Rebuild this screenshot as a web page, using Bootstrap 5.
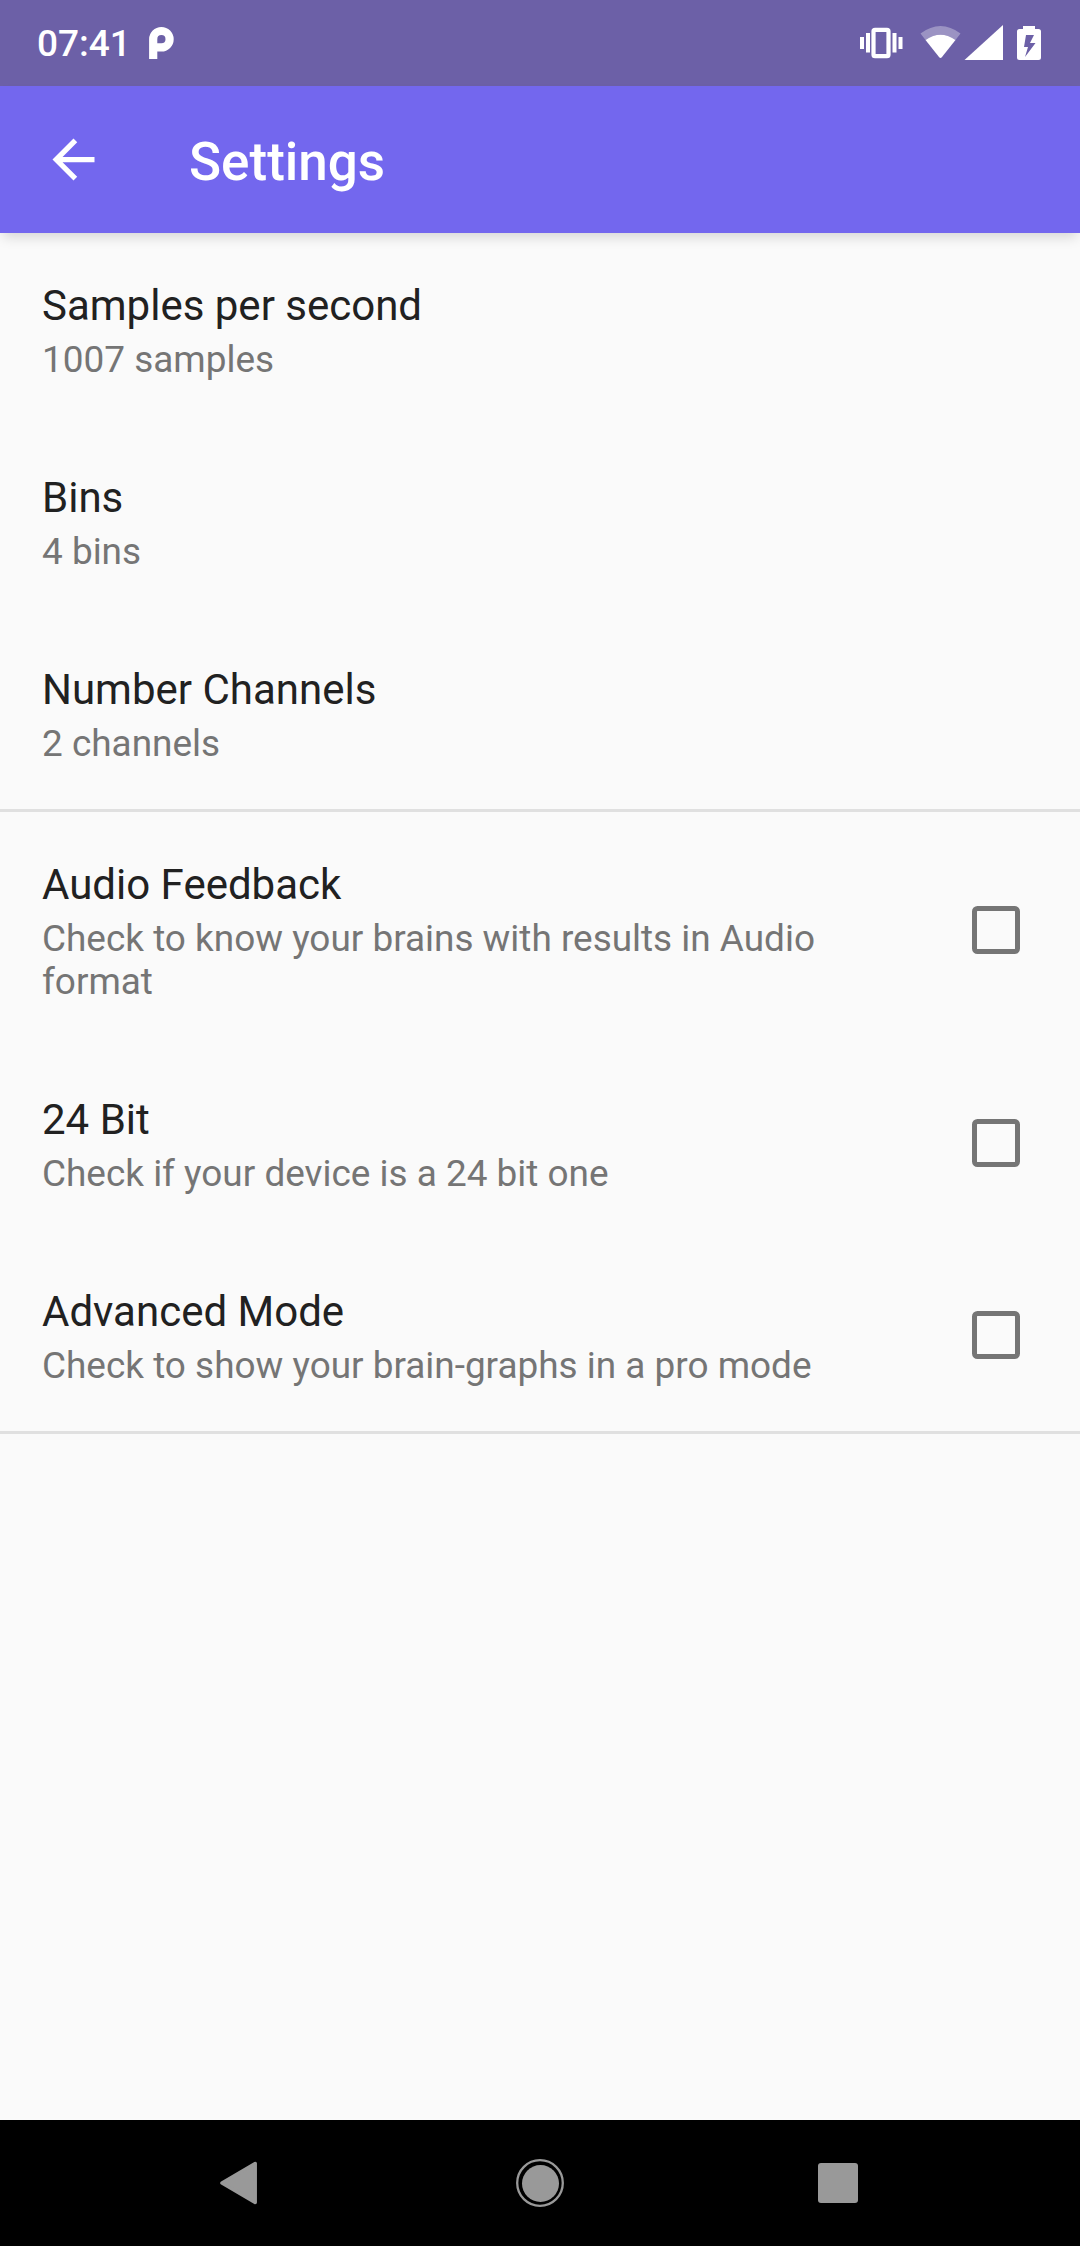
<!DOCTYPE html>
<html lang="en">
<head>
<meta charset="utf-8">
<meta name="viewport" content="width=device-width, initial-scale=1">
<title>Settings</title>
<link href="https://cdn.jsdelivr.net/npm/bootstrap@5.3.0/dist/css/bootstrap.min.css" rel="stylesheet">
<style>
body{font-family:Roboto,"Noto Sans",sans-serif;background:#fafafa;color:#212121}
.screen{height:2246px;width:1080px}
.status-bar{height:86px;background:#6c60a7;color:#fff;padding-left:37px}
.clock{font-size:37px;font-weight:500;line-height:44px;padding-top:2px}
.app-mark{margin-left:18px}
.app-bar{height:147px;background:#7367ee;padding:0 42px;box-shadow:0 7px 12px -3px rgba(0,0,0,.15);z-index:1}
.app-title{font-size:53px;font-weight:500;line-height:62px;color:#fff;margin-left:84px;padding-top:4px}
.pref{padding:48px 60px 44px 42px;border:0;background:transparent;color:#212121}
.pref-title{font-size:42px;line-height:50px;font-weight:400;margin:0 0 7px}
.pref-note{font-size:36.930px;line-height:43px;color:#757575;margin:0}
.pref-text{width:810px}
.pref .form-check-input{width:48px;height:48px;border:5px solid #757575;border-radius:5.5px;background:transparent;margin:0;position:static}
.pref-check{padding-top:0;padding-bottom:0}
.pref-check .pref-text{padding:48px 0 44px}
.group{border-bottom:3px solid #e0e0e0}
.nav-bar{height:126px;background:#000}
svg{display:block;flex:none}
</style>
</head>
<body>
<div class="screen d-flex flex-column">
  <header class="status-bar d-flex align-items-center">
    <span class="clock">07:41</span>
    <svg width="26" height="86" viewBox="149 0 26 86" class="app-mark">
      <path d="M153.200 59V39.200a8.200 8.200 0 1 1 8.200 8.200H153.200" fill="none" stroke="#fff" stroke-width="8.200"/>
    </svg>
    <svg class="ms-auto" width="248" height="86" viewBox="832 0 248 86" fill="#fff">
      <rect x="873.5" y="29.8" width="15" height="26.4" rx="1.5" fill="none" stroke="#fff" stroke-width="4.2"/>
      <path d="M860 37h4v12h-4zM866 33h4v19.500h-4zM892.500 33h4v19.500h-4zM898.500 37h4v12h-4z"/>
      <path d="M920.500 33.500Q940.500 18.500 960.500 33.500L955.500 40Q940.500 29.500 925.500 40z" opacity=".32"/>
      <path d="M925.500 40Q940.500 29.500 955.500 40L942 57Q940.500 58.800 939 57z"/>
      <path d="M1003 25v35h-38.500z"/>
      <path fill-rule="evenodd" d="M1023 29v-3h12v3h3.500q2.500 0 2.500 2.500v26q0 2.500-2.500 2.500h-19q-2.500 0-2.500-2.500v-26q0-2.500 2.500-2.500zM1026 35l-2 12h4l-3 10 10.500-14h-5.500l4-8z"/>
    </svg>
  </header>
  <nav class="app-bar navbar flex-nowrap justify-content-start">
    <svg width="63" height="63" viewBox="0 0 24 24" fill="#fff" role="img" aria-label="Back"><path d="M20 11H7.830l5.590-5.590L12 4l-8 8 8 8 1.410-1.410L7.830 13H20z"/></svg>
    <h1 class="app-title mb-0">Settings</h1>
  </nav>
  <main class="flex-grow-1">
    <div class="list-group list-group-flush group">
      <div class="list-group-item pref"><h2 class="pref-title">Samples per second</h2><p class="pref-note">1007 samples</p></div>
      <div class="list-group-item pref"><h2 class="pref-title">Bins</h2><p class="pref-note">4 bins</p></div>
      <div class="list-group-item pref"><h2 class="pref-title">Number Channels</h2><p class="pref-note">2 channels</p></div>
    </div>
    <div class="list-group list-group-flush group">
      <label class="list-group-item pref pref-check d-flex align-items-center justify-content-between"><span class="pref-text"><span class="pref-title d-block">Audio Feedback</span><span class="pref-note d-block">Check to know your brains with results in Audio format</span></span><input class="form-check-input" type="checkbox"></label>
      <label class="list-group-item pref pref-check d-flex align-items-center justify-content-between"><span class="pref-text"><span class="pref-title d-block">24 Bit</span><span class="pref-note d-block">Check if your device is a 24 bit one</span></span><input class="form-check-input" type="checkbox"></label>
      <label class="list-group-item pref pref-check d-flex align-items-center justify-content-between"><span class="pref-text"><span class="pref-title d-block">Advanced Mode</span><span class="pref-note d-block">Check to show your brain-graphs in a pro mode</span></span><input class="form-check-input" type="checkbox"></label>
    </div>
  </main>
  <footer class="nav-bar">
    <svg width="1080" height="126" viewBox="0 2120 1080 126" fill="#999">
      <path d="M222 2183L255.200 2163.500V2202.500z" stroke="#999" stroke-width="3.500" stroke-linejoin="round"/>
      <circle cx="540" cy="2183" r="22.800" fill="none" stroke="#999" stroke-width="2.300"/>
      <circle cx="540.500" cy="2183.500" r="18.500"/>
      <rect x="818" y="2163" width="40" height="40" rx="3"/>
    </svg>
  </footer>
</div>
<script src="https://cdn.jsdelivr.net/npm/bootstrap@5.3.0/dist/js/bootstrap.bundle.min.js"></script>
</body>
</html>
